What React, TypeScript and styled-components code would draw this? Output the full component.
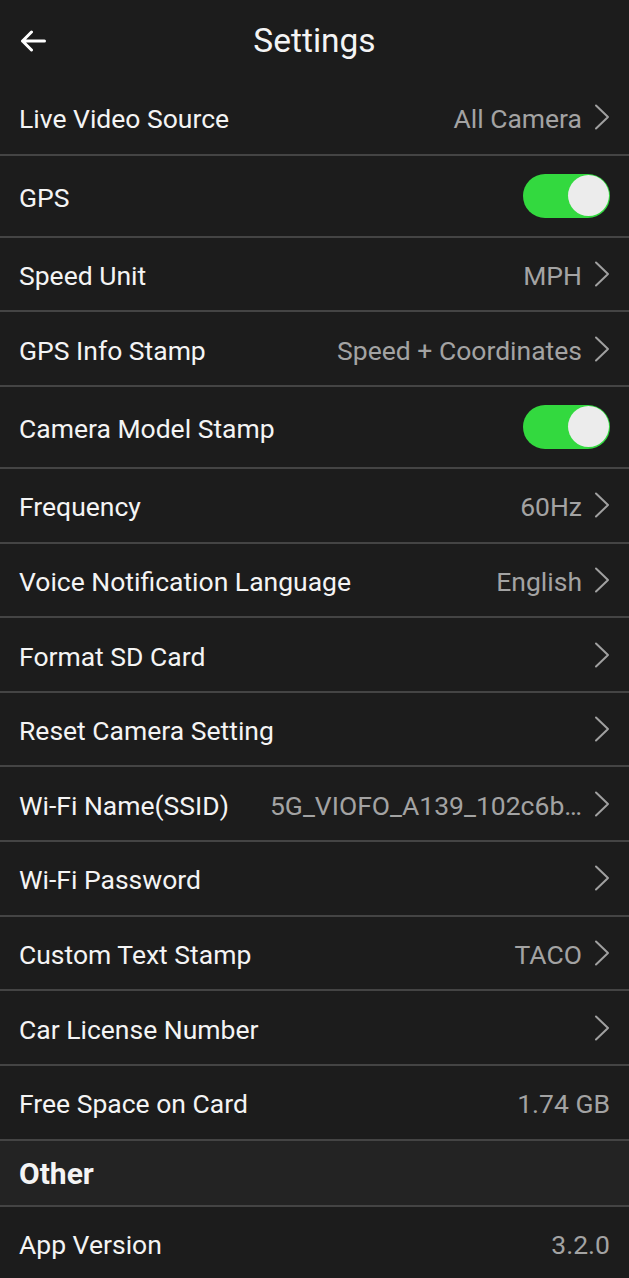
import React from 'react'
import styled, { createGlobalStyle } from 'styled-components'

const GlobalStyle = createGlobalStyle`
	html, body {
		margin: 0;
		padding: 0;
		background: #1c1c1c;
	}
	body {
		font-family: Roboto, "Liberation Sans", sans-serif;
		-webkit-font-smoothing: antialiased;
	}
`

const Page = styled.div`
	width: 629px;
	min-height: 1278px;
	background: #1c1c1c;
	color: #f4f4f4;
`
const Header = styled.header`
	height: 81px;
	display: grid;
	grid-template-columns: 64px 1fr 64px;
	align-items: center;
`
const BackButton = styled.div`
	display: flex;
	align-items: center;
	padding-left: 20px;
	padding-top: 1px;
`
const Title = styled.h1`
	margin: 0;
	text-align: center;
	font-size: 33.5px;
	font-weight: 400;
`
const List = styled.div`
	display: flex;
	flex-direction: column;
`
const Row = styled.div<{ $tall?: boolean }>`
	height: ${({ $tall }) => ($tall ? '80px' : '72.65px')};
	display: flex;
	align-items: center;
	justify-content: space-between;
	padding: 0 19px;
	border-bottom: 2px solid #444444;
	gap: 24px;
`
const Label = styled.span`
	font-size: 26.5px;
	white-space: nowrap;
	padding-top: 3px;
`
const Right = styled.div`
	display: flex;
	align-items: center;
	gap: 12px;
	min-width: 0;
`
const Value = styled.span`
	font-size: 26.5px;
	color: #a3a3a3;
	white-space: nowrap;
	padding-top: 3px;
`
const Section = styled.div`
	height: 66px;
	display: flex;
	align-items: center;
	padding: 2px 19px 0;
	background: #232323;
	border-bottom: 2px solid #444444;
	font-size: 30px;
	font-weight: 700;
	box-sizing: border-box;
`
const Track = styled.div<{ $on: boolean }>`
	width: 87px;
	height: 44px;
	border-radius: 22px;
	background: ${({ $on }) => ($on ? '#33d93f' : '#555555')};
	display: flex;
	align-items: center;
	justify-content: ${({ $on }) => ($on ? 'flex-end' : 'flex-start')};
	padding: 0 1px;
	box-sizing: border-box;
`
const Knob = styled.div`
	width: 41px;
	height: 41px;
	border-radius: 50%;
	background: #ececec;
`

const Chevron = () => (
	<svg width="16" height="26" viewBox="0 0 16 26">
		<path d="M2 1.5 L14 13 L2 24.5" fill="none" stroke="#a0a0a0" strokeWidth="2" strokeLinecap="round" strokeLinejoin="round" />
	</svg>
)

const BackArrow = () => (
	<svg width="26" height="22" viewBox="0 0 26 22">
		<path d="M24.5 11 H2.5 M11.5 2 L2.5 11 L11.5 20" fill="none" stroke="#ffffff" strokeWidth="3" strokeLinecap="round" strokeLinejoin="round" />
	</svg>
)

type Item = {
	label: string
	value?: string
	toggle?: boolean
	arrow?: boolean
}

const items: Item[] = [
	{ label: 'Live Video Source', value: 'All Camera', arrow: true },
	{ label: 'GPS', toggle: true },
	{ label: 'Speed Unit', value: 'MPH', arrow: true },
	{ label: 'GPS Info Stamp', value: 'Speed + Coordinates', arrow: true },
	{ label: 'Camera Model Stamp', toggle: true },
	{ label: 'Frequency', value: '60Hz', arrow: true },
	{ label: 'Voice Notification Language', value: 'English', arrow: true },
	{ label: 'Format SD Card', arrow: true },
	{ label: 'Reset Camera Setting', arrow: true },
	{ label: 'Wi-Fi Name(SSID)', value: '5G_VIOFO_A139_102c6b…', arrow: true },
	{ label: 'Wi-Fi Password', arrow: true },
	{ label: 'Custom Text Stamp', value: 'TACO', arrow: true },
	{ label: 'Car License Number', arrow: true },
	{ label: 'Free Space on Card', value: '1.74 GB' },
]

const SettingRow = ({ item }: { item: Item }) => (
	<Row $tall={item.toggle}>
		<Label>{item.label}</Label>
		<Right>
			{item.value && <Value>{item.value}</Value>}
			{item.toggle && <Track $on><Knob /></Track>}
			{item.arrow && <Chevron />}
		</Right>
	</Row>
)

const App = () => {
	return (
		<Page>
			<GlobalStyle />
			<Header>
				<BackButton><BackArrow /></BackButton>
				<Title>Settings</Title>
				<div />
			</Header>
			<List>
				{items.map((item) => <SettingRow key={item.label} item={item} />)}
				<Section>Other</Section>
				<Row>
					<Label>App Version</Label>
					<Right><Value>3.2.0</Value></Right>
				</Row>
			</List>
		</Page>
	)
}

export default App
